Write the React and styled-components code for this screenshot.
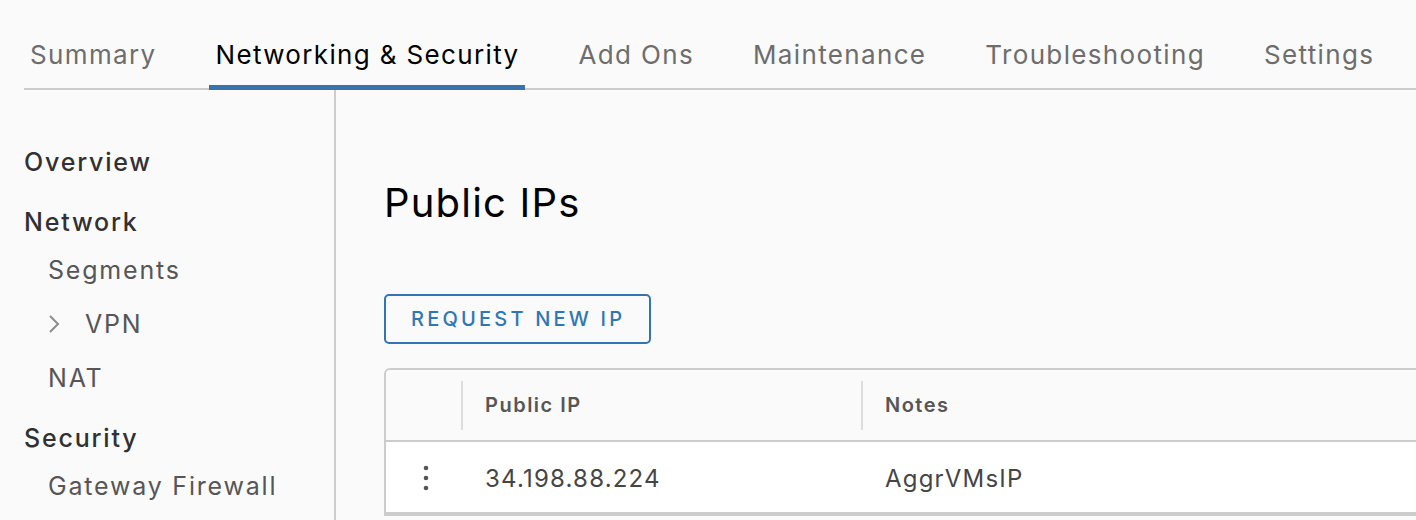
import React from "react";
import styled, { createGlobalStyle } from "styled-components";

const GlobalStyle = createGlobalStyle`
  html, body {
    margin: 0;
    padding: 0;
    background: #fafafa;
    font-family: "Inter", "Noto Sans", sans-serif;
    overflow: hidden;
  }
`;

const tabs = [
  "Summary",
  "Networking & Security",
  "Add Ons",
  "Maintenance",
  "Troubleshooting",
  "Settings",
];

function App() {
  return (
    <Page>
      <GlobalStyle />
      <TabBar>
        {tabs.map((t) => (
          <Tab key={t} active={t === "Networking & Security"}>
            {t}
          </Tab>
        ))}
      </TabBar>
      <Body>
        <Sidebar>
          <NavHeading first>Overview</NavHeading>
          <NavHeading>Network</NavHeading>
          <NavLink>Segments</NavLink>
          <NavGroup>
            <Chevron viewBox="0 0 12 20">
              <path d="M2 2 L10 10 L2 18" fill="none" stroke="#8c8c8c" strokeWidth="2" />
            </Chevron>
            <NavLabel>VPN</NavLabel>
          </NavGroup>
          <NavLink>NAT</NavLink>
          <NavHeading>Security</NavHeading>
          <NavLink>Gateway Firewall</NavLink>
        </Sidebar>
        <Main>
          <Title>Public IPs</Title>
          <OutlineButton>REQUEST NEW IP</OutlineButton>
          <Grid>
            <HeadRow>
              <ActionCell />
              <HeadCell width={400}>Public IP</HeadCell>
              <HeadCell>Notes</HeadCell>
            </HeadRow>
            <Row>
              <ActionCell>
                <Dots viewBox="0 0 6 26">
                  <circle cx="3" cy="3" r="2.3" fill="#565656" />
                  <circle cx="3" cy="13" r="2.3" fill="#565656" />
                  <circle cx="3" cy="23" r="2.3" fill="#565656" />
                </Dots>
              </ActionCell>
              <Cell width={400}>34.198.88.224</Cell>
              <Cell>AggrVMsIP</Cell>
            </Row>
          </Grid>
        </Main>
      </Body>
    </Page>
  );
}

const Page = styled.div`
  width: 1416px;
  height: 520px;
  background: #fafafa;
  overflow: hidden;
`;

const TabBar = styled.div`
  display: flex;
  align-items: flex-end;
  gap: 47px;
  height: 90px;
  margin-left: 24px;
  border-bottom: 2px solid #cccccc;
  box-sizing: border-box;
`;

const Tab = styled.div`
  padding: 0 6px;
  height: 56px;
  margin-bottom: -2px;
  box-sizing: border-box;
  font-size: 26px;
  line-height: 42px;
  white-space: nowrap;
  letter-spacing: 1.35px;
  color: ${(p) => (p.active ? "#000000" : "#6d6d6d")};
  border-bottom: 5px solid ${(p) => (p.active ? "#3275b1" : "transparent")};
`;

const Body = styled.div`
  display: flex;
  height: 430px;
`;

const Sidebar = styled.nav`
  width: 310px;
  flex: none;
  padding: 48px 0 0 24px;
  border-right: 2px solid #cccccc;
`;

const NavHeading = styled.div`
  margin-top: ${(p) => (p.first ? 0 : 12)}px;
  font-size: 25px;
  line-height: 48px;
  font-weight: 500;
  letter-spacing: 1.8px;
  color: #313131;
`;

const NavLink = styled.div`
  padding-left: 24px;
  font-size: 25px;
  line-height: 48px;
  letter-spacing: 1.8px;
  color: #565656;
`;

const NavGroup = styled.div`
  display: flex;
  align-items: center;
  padding: 6px 0 6px 24px;
  height: 48px;
`;

const Chevron = styled.svg`
  width: 12px;
  height: 20px;
  margin-right: 25px;
`;

const NavLabel = styled.span`
  font-size: 25px;
  line-height: 48px;
  letter-spacing: 1.8px;
  color: #565656;
`;

const Main = styled.main`
  flex: 1;
  padding: 89px 0 0 48px;
  overflow: hidden;
`;

const Title = styled.h1`
  margin: 0;
  font-size: 40px;
  line-height: 48px;
  font-weight: 400;
  letter-spacing: 1.2px;
  color: #000000;
`;

const OutlineButton = styled.button`
  display: block;
  margin-top: 67px;
  height: 50px;
  padding: 0 24px 0 25px;
  background: transparent;
  border: 2px solid #3275b1;
  border-radius: 5px;
  font-family: inherit;
  font-size: 20px;
  font-weight: 500;
  letter-spacing: 3.2px;
  color: #2f76b5;
`;

const Grid = styled.div`
  margin-top: 24px;
  width: 1200px;
  border: 2px solid #cccccc;
  border-radius: 6px 0 0 0;
  background: #ffffff;
`;

const HeadRow = styled.div`
  display: flex;
  height: 70px;
  background: #fafafa;
  border-bottom: 2px solid #cccccc;
  border-radius: 6px 0 0 0;
`;

const Row = styled.div`
  display: flex;
  height: 72px;
  padding-top: 2px;
  box-sizing: border-box;
  border-bottom: 2px solid #cccccc;
`;

const ActionCell = styled.div`
  width: 75px;
  flex: none;
  display: flex;
  align-items: center;
  justify-content: center;
`;

const HeadCell = styled.div`
  width: ${(p) => (p.width ? `${p.width}px` : "auto")};
  flex: ${(p) => (p.width ? "none" : 1)};
  display: flex;
  align-items: center;
  padding-left: 24px;
  box-sizing: border-box;
  font-size: 20px;
  font-weight: 600;
  letter-spacing: 1.5px;
  color: #565656;
  position: relative;
  &::before {
    content: "";
    position: absolute;
    left: 0;
    top: 11px;
    bottom: 10px;
    width: 2px;
    background: #dddddd;
  }
`;

const Cell = styled.div`
  width: ${(p) => (p.width ? `${p.width}px` : "auto")};
  flex: ${(p) => (p.width ? "none" : 1)};
  display: flex;
  align-items: center;
  padding-left: 24px;
  box-sizing: border-box;
  font-size: 24px;
  letter-spacing: 1.2px;
  color: #454545;
`;

const Dots = styled.svg`
  width: 6px;
  height: 26px;
  margin-left: 4px;
`;

export default App;
